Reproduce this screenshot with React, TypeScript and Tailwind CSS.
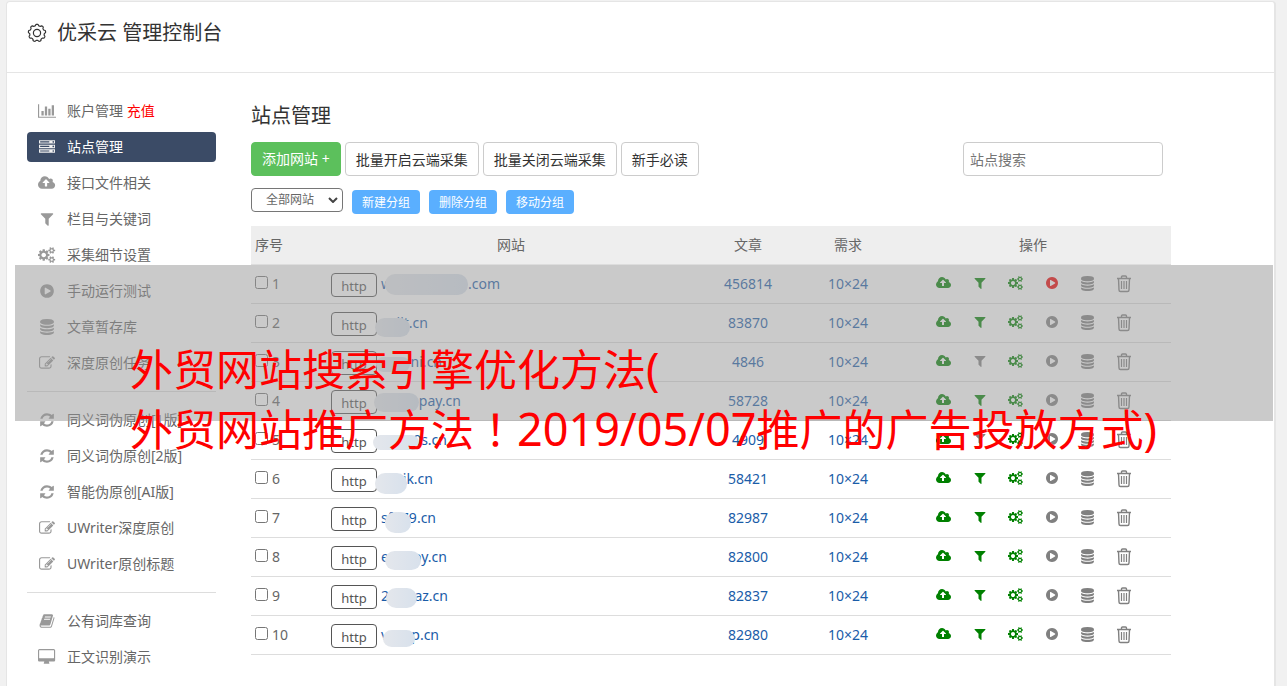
import React from 'react';

type IconProps = { className?: string };

type Shape = { box: string; d: string; extra?: string };

const SHAPES: Record<string, Shape> = {
  chart: {
    box: '0 0 2048 1792',
    d: 'M640 896v512h-256v-512h256zm384-512v1024h-256v-1024h256zm1024 1152v128h-2048v-1536h128v1408h1920zm-640-896v768h-256v-768h256zm384-384v1152h-256v-1152h256z',
  },
  server: {
    box: '0 0 1792 1792',
    d: 'M128 1408h1024v-128h-1024v128zm0-512h1024v-128h-1024v128zm1568 448q0-40-28-68t-68-28-68 28-28 68 28 68 68 28 68-28 28-68zm-1568-960h1024v-128h-1024v128zm1568 448q0-40-28-68t-68-28-68 28-28 68 28 68 68 28 68-28 28-68zm0-512q0-40-28-68t-68-28-68 28-28 68 28 68 68 28 68-28 28-68zm96 832v384h-1792v-384h1792zm0-512v384h-1792v-384h1792zm0-512v384h-1792v-384h1792z',
  },
  cloud: {
    box: '0 0 1920 1792',
    d: 'M1280 864q0-14-9-23l-352-352q-9-9-23-9t-23 9l-351 351q-10 12-10 24 0 14 9 23t23 9h224v352q0 13 9.500 22.500t22.500 9.500h192q13 0 22.500-9.500t9.500-22.500v-352h224q13 0 22.500-9.500t9.500-22.500zm640 288q0 159-112.500 271.500t-271.500 112.500h-1088q-185 0-316.500-131.500t-131.500-316.500q0-130 70-240t188-165q-2-30-2-43 0-212 150-362t362-150q156 0 285.500 87t188.500 231q71-62 166-62 106 0 181 75t75 181q0 76-41 138 130 31 213.500 135.500t83.500 238.500z',
  },
  filter: {
    box: '0 0 1792 1792',
    d: 'M1595 295q17 41-14 70l-493 493v742q0 42-39 59-13 5-25 5-27 0-45-19l-256-256q-19-19-19-45v-486l-493-493q-31-29-14-70 17-39 59-39h1280q42 0 59 39z',
  },
  cogs: {
    box: '0 0 1920 1792',
    d: 'M896 896q0-106-75-181t-181-75-181 75-75 181 75 181 181 75 181-75 75-181zm384-91v185q0 10-7 19.500t-16 10.500l-155 24q-11 35-32 76 34 48 90 115 7 11 7 20 0 12-7 19-23 30-82.500 89.500t-78.500 59.500q-11 0-21-7l-115-90q-37 19-77 31-11 108-23 155-7 24-30 24h-186q-11 0-20-7.500t-10-17.500l-23-153q-34-10-75-31l-118 89q-7 7-20 7-11 0-21-8-144-133-144-160 0-9 7-19 10-14 41-53t47-61q-23-44-35-82l-152-24q-10-1-17-9.500t-7-19.500v-185q0-10 7-19.500t16-10.500l155-24q11-35 32-76-34-48-90-115-7-11-7-20 0-12 7-20 22-30 82-89t79-59q11 0 21 7l115 90q34-18 77-32 11-108 23-154 7-24 30-24h186q11 0 20 7.500t10 17.500l23 153q34 10 75 31l118-89q8-7 20-7 11 0 21 8 144 133 144 160 0 8-7 19-12 16-42 54t-45 60q23 48 34 82l152 23q10 2 17 10.500t7 19.500z',
    extra:
      'M1664 1408q0-52-38-90t-90-38-90 38-38 90q0 53 37.500 90.500t90.500 37.500 90.500-37.500 37.500-90.500zm256-70v140q0 16-149 31-12 27-30 52 51 113 51 138 0 4-4 7-122 71-124 71-8 0-46-47t-52-68q-20 2-30 2t-30-2q-14 21-52 68t-46 47q-2 0-124-71-4-3-4-7 0-25 51-138-18-25-30-52-149-15-149-31v-140q0-16 149-31 13-29 30-52-51-113-51-138 0-4 4-7 4-2 35-20t59-34 30-16q8 0 46 46.500t52 67.500q20-2 30-2t30 2q51-71 92-112l6-2q4 0 124 70 4 3 4 7 0 25-51 138 17 23 30 52 149 15 149 31z',
  },
  play: {
    box: '0 0 1792 1792',
    d: 'M896 128q209 0 385.500 103t279.500 279.500 103 385.500-103 385.500-279.500 279.500-385.500 103-385.500-103-279.500-279.500-103-385.500 103-385.500 279.500-279.500 385.500-103zm384 823q32-18 32-55t-32-55l-544-320q-31-19-64-1-32 19-32 56v640q0 37 32 56 16 8 32 8 17 0 32-9z',
  },
  database: {
    box: '0 0 1792 1792',
    d: 'M896 768q237 0 443-43t325-127v170q0 69-103 128t-280 93.500-385 34.500-385-34.500-280-93.500-103-128v-170q119 84 325 127t443 43zm0 768q237 0 443-43t325-127v170q0 69-103 128t-280 93.500-385 34.500-385-34.500-280-93.500-103-128v-170q119 84 325 127t443 43zm0-384q237 0 443-43t325-127v170q0 69-103 128t-280 93.500-385 34.500-385-34.500-280-93.500-103-128v-170q119 84 325 127t443 43zm0-1152q208 0 385 34.500t280 93.500 103 128v128q0 69-103 128t-280 93.500-385 34.500-385-34.500-280-93.500-103-128v-128q0-69 103-128t280-93.500 385-34.500z',
  },
  edit: {
    box: '0 0 1792 1792',
    d: 'M888 1184l116-116-152-152-116 116v56h96v96h56zm440-720q-16-16-33 1l-350 350q-17 17-1 33t33-1l350-350q17-17 1-33zm80 594v190q0 119-84.500 203.500t-203.500 84.500h-832q-119 0-203.500-84.500t-84.500-203.500v-832q0-119 84.500-203.500t203.500-84.500h832q63 0 117 25 15 7 18 23 3 17-9 29l-49 49q-14 14-32 8-23-6-45-6h-832q-66 0-113 47t-47 113v832q0 66 47 113t113 47h832q66 0 113-47t47-113v-126q0-13 9-22l64-64q15-15 35-7t20 29zm-96-738l288 288-672 672h-288v-288zm444 132l-92 92-288-288 92-92q28-28 68-28t68 28l152 152q28 28 28 68t-28 68z',
  },
  refresh: {
    box: '0 0 1792 1792',
    d: 'M1639 1056q0 5-1 7-64 268-268 434.500t-478 166.500q-146 0-282.500-55t-243.500-157l-129 129q-19 19-45 19t-45-19-19-45v-448q0-26 19-45t45-19h448q26 0 45 19t19 45-19 45l-137 137q71 66 161 102t187 36q134 0 250-65t186-179q11-17 53-117 8-23 30-23h192q13 0 22.500 9.500t9.500 22.500zm25-800v448q0 26-19 45t-45 19h-448q-26 0-45-19t-19-45 19-45l138-138q-148-137-349-137-134 0-250 65t-186 179q-11 17-53 117-8 23-30 23h-199q-13 0-22.500-9.500t-9.500-22.500v-7q65-268 270-434.500t480-166.500q146 0 284 55.500t245 156.500l130-129q19-19 45-19t45 19 19 45z',
  },
  book: {
    box: '0 0 1792 1792',
    d: 'M1703 478q40 57 18 129l-275 906q-19 64-76.500 107.500t-122.500 43.500h-923q-77 0-148.500-53.500t-99.500-131.500q-24-67-2-127 0-4 3-27t4-37q1-8-3-21.500t-3-19.500q2-11 8-21t16.500-23.500 16.500-23.500q23-38 45-91.500t30-91.500q3-10 .5-30t-.5-28q3-11 17-28t17-23q21-36 42-92t25-90q1-9-2.500-32t.5-28q4-13 22-30.500t22-22.500q19-26 42.500-84.500t27.500-96.500q1-8-3-25.500t-2-26.500q2-8 9-18t18-23 17-21q8-12 16.500-30.500t15-35 16-36 19.500-32 26.500-23.500 36-11.500 47.500 5.500l-1 3q38-9 51-9h761q74 0 114 56t18 130l-274 906q-36 119-71.500 153.500t-128.500 34.500h-869q-27 0-38 15-11 16-1 43 24 70 144 70h923q29 0 56-15.500t35-41.500l300-987q7-22 5-57 38 15 59 43zm-1064 2q-4 13 2 22.500t20 9.500h608q13 0 25.500-9.500t16.500-22.500l21-64q4-13-2-22.500t-20-9.500h-608q-13 0-25.500 9.500t-16.500 22.500zm-83 256q-4 13 2 22.500t20 9.500h608q13 0 25.500-9.500t16.500-22.500l21-64q4-13-2-22.500t-20-9.500h-608q-13 0-25.500 9.500t-16.500 22.500z',
  },
  desktop: {
    box: '0 0 1920 1792',
    d: 'M1792 992v-832q0-13-9.500-22.500t-22.500-9.500h-1600q-13 0-22.500 9.500t-9.500 22.500v832q0 13 9.500 22.500t22.500 9.500h1600q13 0 22.500-9.500t9.500-22.500zm128-832v1088q0 66-47 113t-113 47h-544q0 37 16 77.500t32 71 16 43.500q0 26-19 45t-45 19h-512q-26 0-45-19t-19-45q0-14 16-44t32-70 16-78h-544q-66 0-113-47t-47-113v-1088q0-66 47-113t113-47h1600q66 0 113 47t47 113z',
  },
};

function Icon({ name, className }: IconProps & { name: string }) {
  const shape = SHAPES[name];
  return (
    <svg viewBox={shape.box} fill="currentColor" aria-hidden="true" className={className}>
      <path d={shape.d} />
      {shape.extra && (
        <>
          <path d={shape.extra} />
          <path d={shape.extra} transform="translate(0 -1024)" />
        </>
      )}
    </svg>
  );
}

function GearOutline({ className }: IconProps) {
  const teeth = 9;
  const points: string[] = [];
  for (let i = 0; i <= 144; i++) {
    const a = (i / 144) * Math.PI * 2;
    const r = 8 + 0.7 * Math.tanh(2.2 * Math.cos(teeth * a));
    points.push(`${(10 + r * Math.sin(a)).toFixed(2)} ${(10 - r * Math.cos(a)).toFixed(2)}`);
  }
  return (
    <svg viewBox="0 0 20 20" fill="none" stroke="currentColor" strokeWidth="1.2" aria-hidden="true" className={className}>
      <path d={`M${points.join('L')}Z`} />
      <circle cx="10" cy="10" r="3.6" />
    </svg>
  );
}

function TrashOutline({ className }: IconProps) {
  return (
    <svg viewBox="0 0 16 18" fill="none" stroke="currentColor" strokeWidth="1.4" aria-hidden="true" className={className}>
      <path d="M1 3.500h14M5.500 3.500v-1.500q0-1 1-1h3q1 0 1 1v1.500M2.500 3.500l.5 11.500q0 1.500 1.500 1.500h7q1.500 0 1.500-1.500l.5-11.500" />
      <path d="M5.500 6v8M8 6v8M10.500 6v8" strokeWidth="1.2" />
    </svg>
  );
}

type NavItem = { icon: string; label: string; note?: string; active?: boolean };

const NAV: NavItem[][] = [
  [
    { icon: 'chart', label: '账户管理', note: '充值' },
    { icon: 'server', label: '站点管理', active: true },
    { icon: 'cloud', label: '接口文件相关' },
    { icon: 'filter', label: '栏目与关键词' },
    { icon: 'cogs', label: '采集细节设置' },
    { icon: 'play', label: '手动运行测试' },
    { icon: 'database', label: '文章暂存库' },
    { icon: 'edit', label: '深度原创任务' },
  ],
  [
    { icon: 'refresh', label: '同义词伪原创[1版]' },
    { icon: 'refresh', label: '同义词伪原创[2版]' },
    { icon: 'refresh', label: '智能伪原创[AI版]' },
    { icon: 'edit', label: 'UWriter深度原创' },
    { icon: 'edit', label: 'UWriter原创标题' },
  ],
  [
    { icon: 'book', label: '公有词库查询' },
    { icon: 'desktop', label: '正文识别演示' },
  ],
];

type Mask = { left: number; top: number; width: number; height: number };
type Site = {
  head: string;
  tail: string;
  width: number;
  mask: Mask;
  count: string;
  noFilter?: boolean;
  running?: boolean;
};

const SITES: Site[] = [
  { head: 'w', tail: '.com', width: 119, mask: { left: 4, top: 9, width: 83, height: 21 }, count: '456814', running: true },
  { head: '', tail: 'iit.cn', width: 47, mask: { left: -6, top: 14, width: 35, height: 19 }, count: '83870' },
  { head: '', tail: 'ni.cn', width: 61, mask: { left: -5, top: 14, width: 34, height: 15 }, count: '4846', noFilter: true },
  { head: '', tail: 'pay.cn', width: 80, mask: { left: -7, top: 11, width: 45, height: 19 }, count: '58728' },
  { head: '', tail: '0s.cn', width: 66, mask: { left: -8, top: 14, width: 46, height: 15 }, count: '4909', noFilter: true },
  { head: '', tail: 'ik.cn', width: 52, mask: { left: -6, top: 13, width: 32, height: 21 }, count: '58421' },
  { head: 'sf', tail: '79.cn', width: 55, mask: { left: 4, top: 13, width: 26, height: 21 }, count: '82987' },
  { head: 'e', tail: 'oy.cn', width: 66, mask: { left: 4, top: 13, width: 36, height: 19 }, count: '82800' },
  { head: '2', tail: 'az.cn', width: 67, mask: { left: 5, top: 11, width: 31, height: 20 }, count: '82837' },
  { head: 'v', tail: 'p.cn', width: 58, mask: { left: 2, top: 14, width: 32, height: 17 }, count: '82980' },
];

function Sidebar() {
  return (
    <nav className="w-[189px] shrink-0 pt-[23px] text-sm text-[#666]">
      {NAV.map((group, g) => (
        <ul
          key={g}
          className={g > 0 ? 'mt-[13px] flex flex-col gap-[6px] border-t border-[#ddd] pt-[13px]' : 'flex flex-col gap-[6px]'}
        >
          {group.map((item) => (
            <li key={item.label}>
              <a
                href="#"
                className={
                  item.active
                    ? 'flex h-[30px] items-center rounded bg-[#3b4b66] text-white'
                    : 'flex h-[30px] items-center rounded'
                }
              >
                <span className={item.active ? 'flex w-10 justify-center text-[#f0f0f0]' : 'flex w-10 justify-center text-[#999]'}>
                  <Icon name={item.icon} className="h-4 w-auto" />
                </span>
                <span>
                  {item.label}
                  {item.note && <span className="text-[#f00]"> {item.note}</span>}
                </span>
              </a>
            </li>
          ))}
        </ul>
      ))}
    </nav>
  );
}

function Toolbar() {
  const plain = 'h-[34px] rounded border border-[#ccc] bg-white px-[10px] pt-[2px] text-[#333]';
  return (
    <div className="flex items-center gap-1 pr-2 text-sm">
      <button type="button" className="h-[34px] rounded border border-[#5cc05c] bg-[#5cc05c] px-[10px] text-white">
        添加网站 +
      </button>
      <button type="button" className={plain}>批量开启云端采集</button>
      <button type="button" className={plain}>批量关闭云端采集</button>
      <button type="button" className={plain}>新手必读</button>
      <input
        type="text"
        aria-label="站点搜索"
        placeholder="站点搜索"
        className="ml-auto h-[34px] w-[200px] rounded border border-[#ccc] px-[6px] placeholder:text-[#757575]"
      />
    </div>
  );
}

function Groups() {
  return (
    <div className="mt-3 flex h-[26px] items-start gap-[9px] text-xs">
      <div className="relative">
        <select
          aria-label="网站分组"
          className="h-6 w-[92px] appearance-none rounded border border-[#767676] bg-white pl-[14px] text-[#666]"
        >
          <option>全部网站</option>
        </select>
        <svg viewBox="0 0 10 6" fill="none" stroke="#444" strokeWidth="2" aria-hidden="true" className="pointer-events-none absolute top-[9px] right-[5px] h-[6px] w-[10px]">
          <path d="M1 1l4 4 4-4" />
        </svg>
      </div>
      {['新建分组', '删除分组', '移动分组'].map((label) => (
        <button key={label} type="button" className="mt-[2px] h-6 rounded bg-[#5aafff] px-[10px] pt-[2px] text-white">
          {label}
        </button>
      ))}
    </div>
  );
}

function SiteRow({ site, index }: { site: Site; index: number }) {
  return (
    <tr className="border-b border-[#ddd]">
      <td className="h-[39px] p-0 pl-1">
        <label className="flex items-center gap-1">
          <input type="checkbox" className="mb-[3px] h-[13px] w-[13px]" />
          {index + 1}
        </label>
      </td>
      <td className="p-0 pl-1">
        <div className="flex h-[38px] items-center gap-1">
          <button type="button" className="mt-[2px] h-6 w-[46px] rounded border border-[#555] pt-[2px] text-[13px] leading-5 text-[#555]">
            http
          </button>
          <div className="relative flex h-full items-center">
            <a href="#" className="flex justify-between text-[#1a5ca8]" style={{ width: site.width }}>
              <span>{site.head}</span>
              <span>{site.tail}</span>
            </a>
            <span
              aria-hidden="true"
              className="absolute rounded-[10px] bg-linear-to-r from-[#e4e7ec] to-[#d8e1ec]"
              style={site.mask}
            />
          </div>
        </div>
      </td>
      <td className="p-0 text-center text-[#1a5ca8]">{site.count}</td>
      <td className="p-0 text-center text-[#1a5ca8]">10×24</td>
      <td className="p-0 pl-px">
        <div className="flex justify-center text-[#808080]">
          <button type="button" aria-label="上传接口" className="flex w-9 justify-center text-[#008000]">
            <Icon name="cloud" className="h-[14px] w-auto" />
          </button>
          <button type="button" aria-label="关键词" className={site.noFilter ? 'flex w-9 justify-center' : 'flex w-9 justify-center text-[#008000]'}>
            <Icon name="filter" className="h-[14px] w-auto" />
          </button>
          <button type="button" aria-label="采集设置" className="flex w-9 justify-center text-[#008000]">
            <Icon name="cogs" className="h-[14px] w-auto" />
          </button>
          <button type="button" aria-label="运行" className={site.running ? 'flex w-9 justify-center text-[#f00000]' : 'flex w-9 justify-center'}>
            <Icon name="play" className="h-[14px] w-auto" />
          </button>
          <button type="button" aria-label="文章库" className="flex w-9 justify-center">
            <Icon name="database" className="h-[15px] w-auto" />
          </button>
          <button type="button" aria-label="删除" className="flex w-9 items-center justify-center">
            <TrashOutline className="-my-1 h-[18px] w-4" />
          </button>
        </div>
      </td>
    </tr>
  );
}

function SiteTable() {
  return (
    <table className="mt-3 w-full table-fixed border-collapse text-sm text-[#666]">
      <colgroup>
        <col className="w-[76px]" />
        <col />
        <col className="w-[106px]" />
        <col className="w-[94px]" />
        <col className="w-[276px]" />
      </colgroup>
      <thead>
        <tr className="border-b border-[#ddd] bg-[#eee]">
          <th className="h-[38px] p-0 pl-1 text-left font-normal">序号</th>
          <th className="p-0 font-normal">网站</th>
          <th className="p-0 font-normal">文章</th>
          <th className="p-0 font-normal">需求</th>
          <th className="p-0 font-normal">操作</th>
        </tr>
      </thead>
      <tbody>
        {SITES.map((site, i) => (
          <SiteRow key={i} site={site} index={i} />
        ))}
      </tbody>
    </table>
  );
}

export default function App() {
  return (
    <div className="relative min-h-screen overflow-hidden bg-[#f1f1f1] pt-px pr-[11px] pl-[6px] font-['Noto_Sans','Noto_Sans_CJK_SC',sans-serif]">
      <div className="min-h-[calc(100vh-1px)] rounded-t border border-r-2 border-b-0 border-[#e5e5e5] bg-white">
        <header className="flex h-[71px] items-start border-b border-[#e5e5e5] px-5 pt-4 text-[#333]">
          <GearOutline className="mt-[5px] h-5 w-5" />
          <h1 className="ml-[10px] text-xl leading-[30px]">优采云 管理控制台</h1>
        </header>
        <div className="flex gap-[35px] pr-[103px] pl-5">
          <Sidebar />
          <main className="min-w-0 flex-1 pt-7">
            <h2 className="mb-[11px] text-xl leading-[30px] text-[#333]">站点管理</h2>
            <Toolbar />
            <Groups />
            <SiteTable />
          </main>
        </div>
      </div>
      <div className="pointer-events-none absolute top-[265px] right-[14px] left-[15px] h-[156px] bg-[#969696]/50" />
      <p className="pointer-events-none absolute top-[340px] left-[130px] text-[43px] leading-[60px] whitespace-nowrap text-[#f00]">
        <span className="block h-[60px]">
          外贸网站搜索引擎优化方法<span className="text-[45px] leading-none">(</span>
        </span>
        <span className="block h-[60px]">
          外贸网站推广方法
          <span className="font-['Noto_Sans_CJK_TC',sans-serif] leading-none" lang="zh-TW">！</span>
          <span className="text-[45px] leading-none">2019/05/07</span>
          推广的广告投放方式<span className="text-[45px] leading-none">)</span>
        </span>
      </p>
    </div>
  );
}
